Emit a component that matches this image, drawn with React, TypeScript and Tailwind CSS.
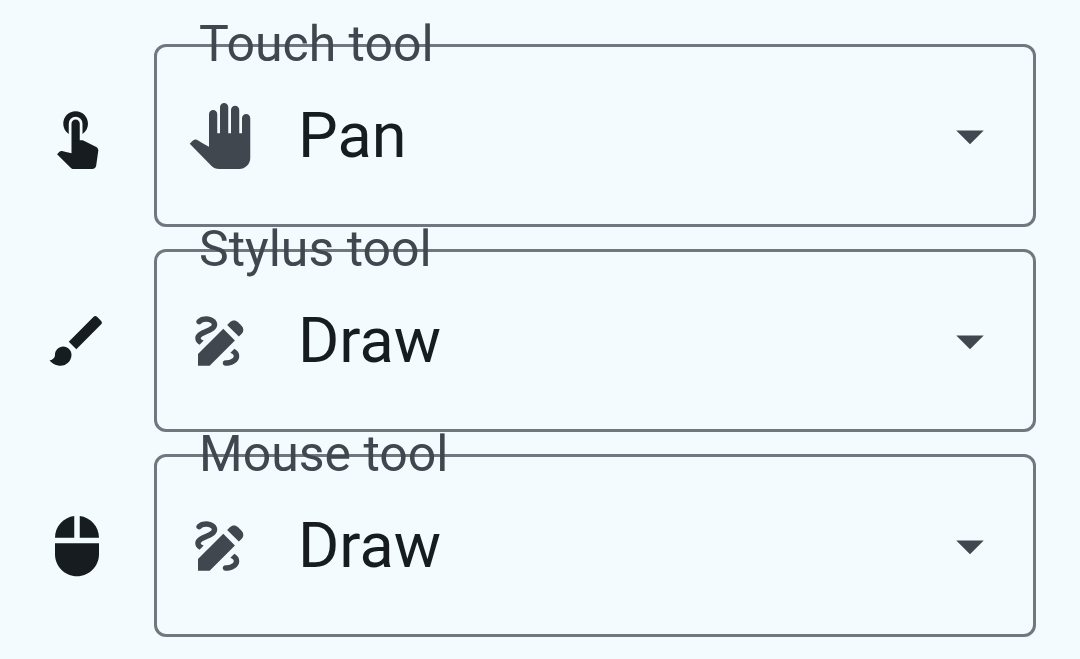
import { useId, useState } from "react";
import type { IconType } from "react-icons";
import { MdArrowDropDown, MdBrush, MdDraw, MdMouse, MdPanTool, MdTouchApp } from "react-icons/md";

const toolIcons: Record<string, IconType> = {
  Pan: MdPanTool,
  Draw: MdDraw,
};

type ToolFieldProps = {
  label: string;
  device: IconType;
  initial: string;
};

function ToolField({ label, device: Device, initial }: ToolFieldProps) {
  const id = useId();
  const [tool, setTool] = useState(initial);
  const ToolIcon = toolIcons[tool];

  return (
    <div className="flex items-center gap-11">
      <Device className="size-[66px] shrink-0 text-[#171c20]" aria-hidden />
      <div className="relative flex min-w-0 flex-1 items-center rounded-xl border-3 border-[#70777f] px-[30px] py-10 text-[#40474f]">
        <label htmlFor={id} className="absolute -top-[33px] left-[42px] text-[50px] leading-[60px]">
          {label}
        </label>
        <ToolIcon className="size-[66px] shrink-0" aria-hidden />
        <select
          id={id}
          value={tool}
          onChange={(event) => setTool(event.target.value)}
          className="h-[97px] min-w-0 flex-1 appearance-none bg-transparent pl-[45px] text-[63px] leading-[92px] text-[#171c20] outline-none"
        >
          <option>Pan</option>
          <option>Draw</option>
        </select>
        <MdArrowDropDown className="pointer-events-none size-[66px] shrink-0" aria-hidden />
      </div>
    </div>
  );
}

export default function App() {
  return (
    <main className="flex min-h-screen flex-col gap-[22px] bg-[#f3fbff] pt-11 pr-11 pb-[22px] pl-11 font-['Roboto',sans-serif]">
      <ToolField label="Touch tool" device={MdTouchApp} initial="Pan" />
      <ToolField label="Stylus tool" device={MdBrush} initial="Draw" />
      <ToolField label="Mouse tool" device={MdMouse} initial="Draw" />
    </main>
  );
}
